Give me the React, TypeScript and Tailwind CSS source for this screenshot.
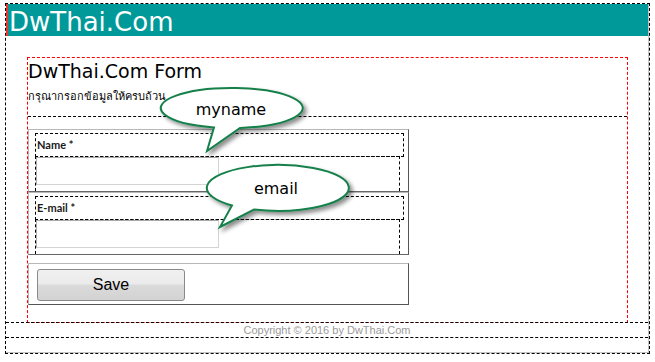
import React from "react";

function Bubble({
  left,
  top,
  w,
  h,
  d,
  label,
  tx,
  ty,
}: {
  left: number;
  top: number;
  w: number;
  h: number;
  d: string;
  label: string;
  tx: number;
  ty: number;
}) {
  return (
    <svg
      className="absolute"
      style={{ left, top }}
      width={w}
      height={h}
      viewBox={`0 0 ${w} ${h}`}
    >
      <defs>
        <filter id={`sh-${label}`} x="-20%" y="-20%" width="140%" height="150%">
          <feDropShadow dx="3" dy="3" stdDeviation="2" floodColor="#000" floodOpacity="0.45" />
        </filter>
      </defs>
      <path d={d} fill="#fff" stroke="#17804c" strokeWidth="2" filter={`url(#sh-${label})`} />
      <text
        x={tx}
        y={ty}
        textAnchor="middle"
        fontSize="16"
        fontFamily="'DejaVu Sans', sans-serif"
        fill="#000"
      >
        {label}
      </text>
    </svg>
  );
}

function FieldRow({ label }: { label: string }) {
  return (
    <div className="h-[63px] flex flex-col border border-t-[#b8b8b8] border-l-[#b8b8b8] border-r-[#555] border-b-[#666] pt-[3px] pl-[6px]">
      <div className="w-[369px] h-[24px] shrink-0 border border-dashed border-black pl-px pt-[4px] text-[11px] leading-[14px] font-bold text-[#1a1a1a] font-['Lato',sans-serif]">
        {label}
      </div>
      <div className="-mt-px w-[365px] flex-1 border-t border-l border-r border-dashed border-black">
        <div className="w-[183px] h-[28px] bg-white border border-t-[#a9a9a9] border-l-[#b0b0b0] border-r-[#d4d4d4] border-b-[#d4d4d4]" />
      </div>
    </div>
  );
}

export default function App() {
  return (
    <div className="relative w-[655px] h-[362px] bg-white pt-[3px] pl-[5px] overflow-hidden">
      <div className="w-[645px] h-[351px] border border-dashed border-black">
        <div className="w-full h-full border-r border-b border-[#c4c4c4] flex flex-col">
          <div className="h-[32px] shrink-0 bg-[#009999] border-l-2 border-[#e8392f] pl-px pt-[5px] text-[26px] leading-[27px] text-white font-['DejaVu_Sans',sans-serif]">
            DwThai.Com
          </div>

          <div className="mt-[21px] ml-[21px] w-[601px] h-[266px] shrink-0 border border-dashed border-[#ff0000]">
            <div className="h-[59px] border-b border-dashed border-black pt-px">
              <div className="text-[19px] leading-[24px] text-black font-['DejaVu_Sans',sans-serif]">
                DwThai.Com Form
              </div>
              <div className="mt-[6px] text-[11px] leading-[14px] text-black font-['Noto_Sans','DejaVu_Sans',sans-serif]">
                กรุณากรอกข้อมูลให้ครบถ้วน
              </div>
            </div>

            <div className="mt-[12px] w-[381px]">
              <FieldRow label="Name *" />
              <FieldRow label="E-mail *" />
              <div className="mt-[8px] h-[42px] border border-t-[#b8b8b8] border-l-[#b8b8b8] border-r-[#555] border-b-[#555] pt-[5px] pl-[8px]">
                <button className="w-[148px] h-[32px] rounded-[3px] border border-[#8a8a8a] bg-[linear-gradient(#f0f0f0_0%,#ebebeb_45%,#dadada_52%,#d3d3d3_100%)] text-[16px] leading-[30px] text-black font-['Liberation_Sans',Arial,sans-serif]">
                  Save
                </button>
              </div>
            </div>
          </div>

          <div className="-mt-px h-[16px] shrink-0 border-t border-b border-dashed border-black text-center text-[11px] leading-[14px] text-[#9a9a9a] font-['Liberation_Sans',Arial,sans-serif]">
            Copyright © 2016 by DwThai.Com
          </div>
        </div>
      </div>

      <Bubble
        left={150}
        top={80}
        w={180}
        h={80}
        d="M 90 47.9 A 71 20 0 1 0 64 47.4 L 57 71 Z"
        label="myname"
        tx={81}
        ty={35}
      />
      <Bubble
        left={195}
        top={155}
        w={175}
        h={85}
        d="M 59 54.6 A 71 23 0 1 0 37 50.5 L 25 72 Z"
        label="email"
        tx={81}
        ty={39}
      />
    </div>
  );
}
